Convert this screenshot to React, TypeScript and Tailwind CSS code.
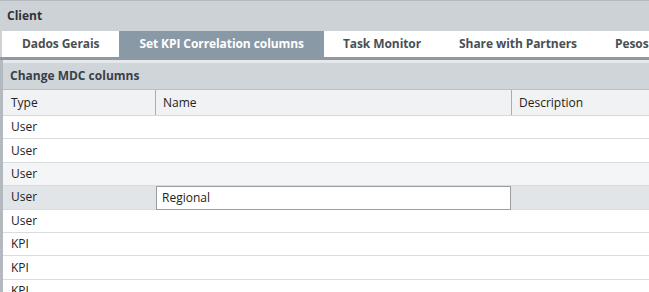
const tabs = ["Dados Gerais", "Set KPI Correlation columns", "Task Monitor", "Share with Partners", "Pesos de"];

const rows = [
  { type: "User", state: "" },
  { type: "User", state: "" },
  { type: "User", state: "hover" },
  { type: "User", state: "selected", name: "Regional" },
  { type: "User", state: "" },
  { type: "KPI", state: "" },
  { type: "KPI", state: "" },
  { type: "KPI", state: "" },
];

const App = () => {
  return (
    <div className="w-[649px] h-[292px] overflow-hidden bg-[#cdd2d6] text-[12px] font-['Open_Sans','Noto_Sans',sans-serif]">
      <div className="h-[31px] flex items-center px-[7px] border-t border-[#b4babf] font-bold text-[#2e3338]">Client</div>

      <div className="ml-[2px] flex h-[26px] bg-white whitespace-nowrap tracking-[-0.08px]">
        {tabs.map((t, i) => (
          <div
            key={t}
            className={
              i === 1
                ? "shrink-0 flex items-center px-[20px] h-[26px] bg-[#8a99a6] text-white font-bold"
                : i === 0
                ? "shrink-0 flex items-center px-[20px] h-[25px] text-[#4a4f54] font-bold"
                : "shrink-0 flex items-center px-[19px] h-[25px] text-[#4a4f54] font-bold"
            }
          >
            {t}
          </div>
        ))}
      </div>
      <div className="h-[3px] bg-[#8d9aa6]" />

      <div className="flex h-full">
        <div className="w-[3px] shrink-0 bg-[#b3b9be]" />
        <div className="flex-1 bg-white">
          <div className="h-[3px] bg-[#e6e9eb]" />
          <div className="h-[27px] flex items-center px-[7px] bg-[#d0d5d9] border-b border-[#b9bfc4] font-bold text-[#3a4046]">
            Change MDC columns
          </div>
          <div className="flex h-[26px] bg-[#f1f2f3] border-b border-[#d6d9dc] text-[#222]">
            <div className="w-[153px] flex items-center px-[8px] border-r border-[#a9aeb3]">Type</div>
            <div className="w-[356px] flex items-center px-[7px] border-r border-[#a9aeb3]">Name</div>
            <div className="flex-1 flex items-center px-[7px]">Description</div>
          </div>
          {rows.map((r, i) => (
            <div
              key={i}
              className={
                "relative flex h-[23.4px] border-b border-[#d9dcdf] text-[#222] " +
                (r.state === "hover" ? "bg-[#f4f5f6]" : r.state === "selected" ? "bg-[#e2e5e8]" : "bg-white")
              }
            >
              <div className="w-[153px] flex items-center px-[8px]">{r.type}</div>
              {r.name && (
                <div className="absolute left-[153px] top-0 w-[355px] h-[24px] flex items-center px-[5px] bg-white border border-[#9a9ea2] z-10">
                  {r.name}
                </div>
              )}
            </div>
          ))}
        </div>
      </div>
    </div>
  );
};

export default App;
